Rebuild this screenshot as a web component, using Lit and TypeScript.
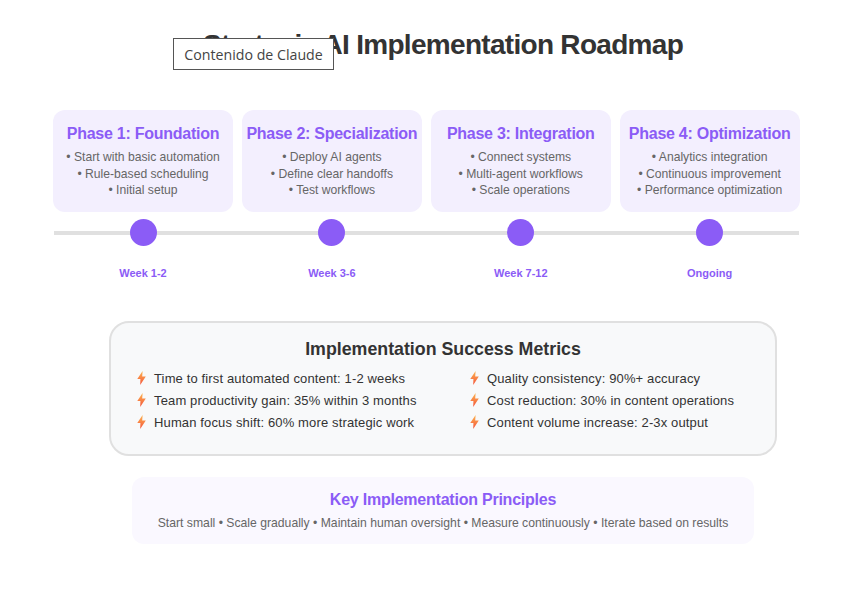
import { LitElement, html, css } from "lit";
import { customElement } from "lit/decorators.js";

const phases = [
  { t: "Phase 1: Foundation", i: ["Start with basic automation", "Rule-based scheduling", "Initial setup"], w: "Week 1-2" },
  { t: "Phase 2: Specialization", i: ["Deploy AI agents", "Define clear handoffs", "Test workflows"], w: "Week 3-6" },
  { t: "Phase 3: Integration", i: ["Connect systems", "Multi-agent workflows", "Scale operations"], w: "Week 7-12" },
  { t: "Phase 4: Optimization", i: ["Analytics integration", "Continuous improvement", "Performance optimization"], w: "Ongoing" },
];
const metrics = [
  "Time to first automated content: 1-2 weeks",
  "Quality consistency: 90%+ accuracy",
  "Team productivity gain: 35% within 3 months",
  "Cost reduction: 30% in content operations",
  "Human focus shift: 60% more strategic work",
  "Content volume increase: 2-3x output",
];

@customElement("app-root")
export class AppRoot extends LitElement {
  static styles = css`
    :host { display: block; position: relative; width: 861px; height: 603px; background: #fff; font-family: "Liberation Sans", Arial, sans-serif; overflow: hidden; }
    .page { display: flex; flex-direction: column; align-items: center; padding: 29px 0 0 25px; }
    h1 { margin: 0; font-size: 28px; line-height: 32px; font-weight: 700; color: #333; text-align: center; letter-spacing: -0.7px; }
    .grid { display: grid; grid-template-columns: repeat(4, 180px); column-gap: 8.9px; width: 747px; align-self: flex-start; margin-left: 28px; }
    .cards { margin-top: 49px; }
    .card { box-sizing: border-box; height: 102px; background: #f3effe; border-radius: 12px; padding-top: 14px; text-align: center; }
    .card h3 { margin: 0 0 6px; font-size: 16px; line-height: 19px; font-weight: 700; color: #8b5cf6; white-space: nowrap; letter-spacing: -0.26px; }
    .card div { font-size: 12.15px; line-height: 16.5px; color: #666; white-space: nowrap; }
    .timeline { position: relative; margin-top: 7px; height: 28px; }
    .line { position: absolute; left: 1px; right: 1px; top: 12px; height: 4px; background: #e0e0e0; }
    .dot { position: relative; width: 27px; height: 27px; border-radius: 50%; background: #8b5cf6; justify-self: center; }
    .weeks { margin-top: 20px; }
    .week { font-size: 11px; line-height: 13px; font-weight: 700; color: #8b5cf6; text-align: center; }
    .metrics { box-sizing: border-box; width: 668px; height: 135px; margin-top: 41px; background: #f8f9fa; border: 2px solid #e0e0e0; border-radius: 20px; padding: 16px 24px 0 26px; }
    .metrics h2 { margin: 0 0 7px; font-size: 17.8px; line-height: 21px; font-weight: 700; color: #333; text-align: center; padding-right: 2px; }
    .mgrid { display: grid; grid-template-columns: 333px 1fr; }
    .m { display: flex; align-items: center; gap: 8px; height: 22px; font-size: 13px; letter-spacing: 0.14px; color: #333; white-space: nowrap; }
    .m svg { width: 9px; height: 14px; flex: none; }
    .principles { box-sizing: border-box; width: 622px; height: 67px; margin-top: 21px; background: #faf8ff; border-radius: 12px; padding-top: 13px; text-align: center; }
    .principles h3 { margin: 0 0 6px; font-size: 16px; line-height: 19px; font-weight: 700; color: #8b5cf6; letter-spacing: -0.23px; }
    .principles p { margin: 0; font-size: 12.2px; line-height: 16px; color: #666; }
    .tip { position: absolute; left: 173px; top: 38px; box-sizing: border-box; width: 161px; height: 32px; display: flex; align-items: center; justify-content: center; background: #fff; border: 1px solid #555; font-family: "Open Sans", sans-serif; font-size: 14.2px; color: #444; white-space: nowrap; }
  `;

  bolt() {
    return html`<svg viewBox="0 0 9 14" aria-hidden="true">
      <defs><linearGradient id="b" x1="0" y1="0" x2="0" y2="1"><stop offset="0" stop-color="#fdb64e"/><stop offset="1" stop-color="#f4533c"/></linearGradient></defs>
      <path d="M5.6 0 L0.3 8 L3.4 8 L3.2 14 L8.8 5.6 L5.2 5.6 Z" fill="url(#b)"/>
    </svg>`;
  }

  render() {
    return html`
      <div class="page">
        <h1>Strategic AI Implementation Roadmap</h1>
        <div class="grid cards">
          ${phases.map((p) => html`<div class="card"><h3>${p.t}</h3>${p.i.map((x) => html`<div>• ${x}</div>`)}</div>`)}
        </div>
        <div class="grid timeline">
          <div class="line"></div>
          ${phases.map(() => html`<div class="dot"></div>`)}
        </div>
        <div class="grid weeks">
          ${phases.map((p) => html`<div class="week">${p.w}</div>`)}
        </div>
        <div class="metrics">
          <h2>Implementation Success Metrics</h2>
          <div class="mgrid">
            ${metrics.map((m) => html`<div class="m">${this.bolt()}<span>${m}</span></div>`)}
          </div>
        </div>
        <div class="principles">
          <h3>Key Implementation Principles</h3>
          <p>Start small • Scale gradually • Maintain human oversight • Measure continuously • Iterate based on results</p>
        </div>
      </div>
      <div class="tip">Contenido de Claude</div>
    `;
  }
}
